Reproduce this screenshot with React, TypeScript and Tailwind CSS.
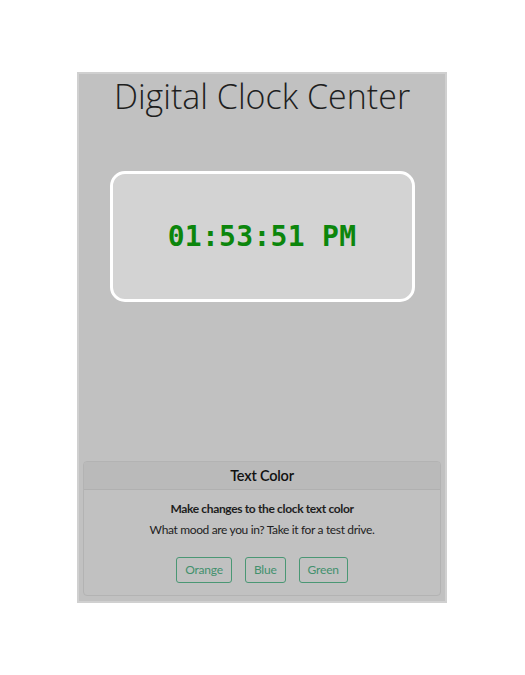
import React from "react";

const buttons = ["Orange", "Blue", "Green"];

export default function App() {
  return (
    <div className="w-[525px] h-[675px] bg-white pt-[72px] pl-[77px]">
      <div className="w-[370px] h-[531px] bg-[#c1c1c1] border-2 border-[#d0d0d0] flex flex-col items-center font-['Lato',sans-serif]">
        <h1 className="font-['Open_Sans',sans-serif] text-[34px] leading-[44px] font-light text-[#1e1e1e]">
          Digital Clock Center
        </h1>

        <div className="mt-[53px] w-[305px] h-[131px] rounded-[15px] border-[3px] border-white bg-[#d3d3d3] flex items-center justify-center">
          <span className="font-['DejaVu_Sans_Mono',monospace] font-bold text-[28px] text-[#0c860c] tracking-[0.3px]">
            01:53:51 PM
          </span>
        </div>

        <div className="mt-auto mb-[5px] w-[358px] border border-[#b3b3b3] rounded-[4px] overflow-hidden">
          <div className="h-[28px] bg-[#bababa] border-b border-[#b0b0b0] flex items-center justify-center text-[14.5px] font-semibold tracking-[-0.2px] text-[#111]">
            Text Color
          </div>
          <div className="flex flex-col items-center pt-[9px] pb-[12px] text-[#1e1e1e]">
            <p className="text-[12px] font-bold leading-[20px] tracking-[-0.35px]">Make changes to the clock text color</p>
            <p className="text-[12px] leading-[20px] mt-[1px] tracking-[-0.35px]">What mood are you in? Take it for a test drive.</p>
            <div className="flex gap-[13px] mt-[17px]">
              {buttons.map((b) => (
                <button
                  key={b}
                  className="h-[26px] px-[8px] rounded-[3px] border border-[#4a9774] text-[12px] tracking-[-0.2px] text-[#43906d] bg-transparent"
                >
                  {b}
                </button>
              ))}
            </div>
          </div>
        </div>
      </div>
    </div>
  );
}
